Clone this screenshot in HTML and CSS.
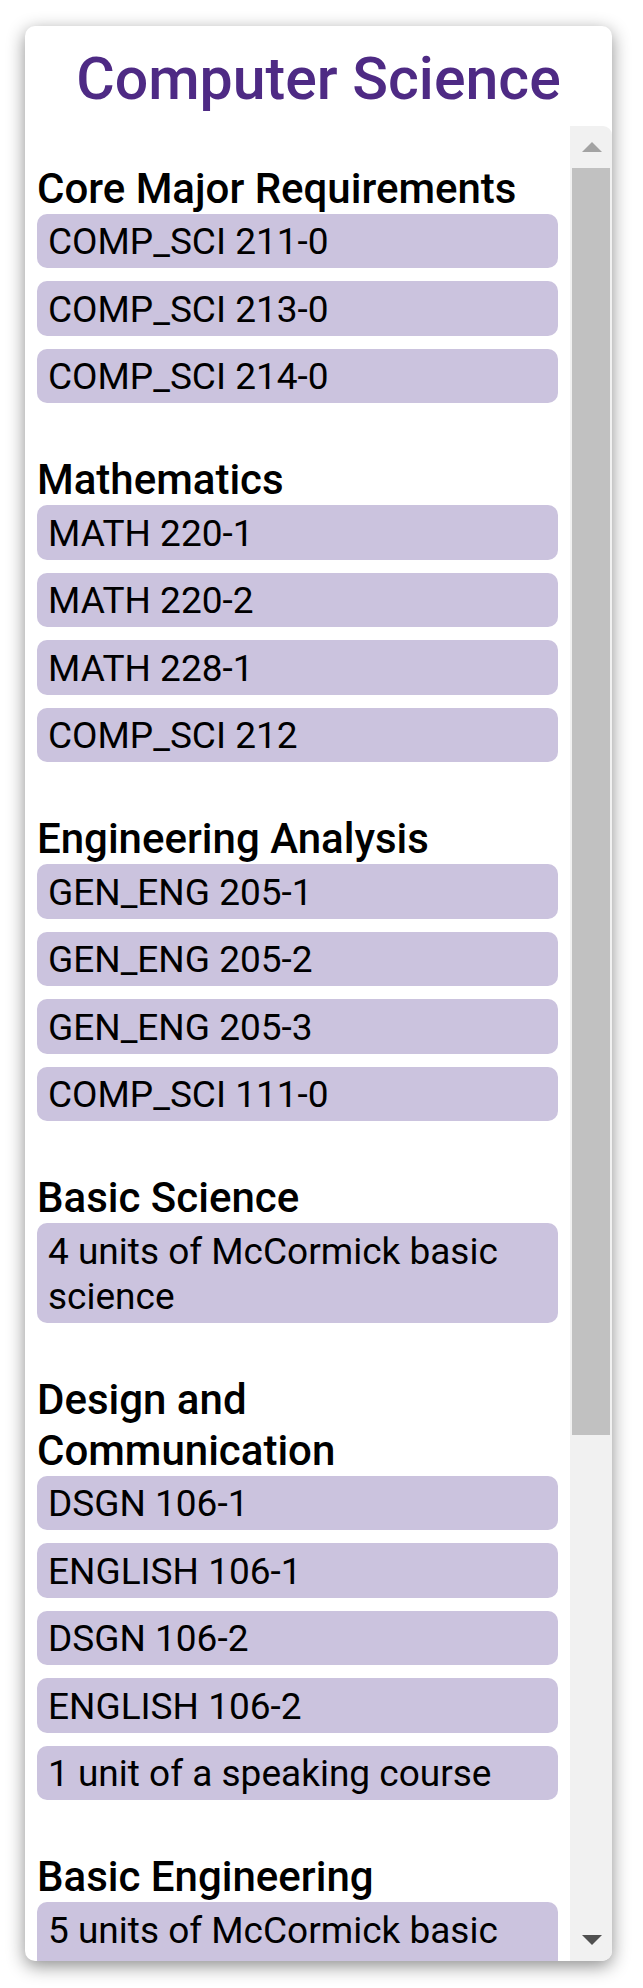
FILE: index.html
```html
<!DOCTYPE html>
<html lang="en">
<head>
<meta charset="utf-8">
<title>Computer Science</title>
<link rel="stylesheet" href="styles.css">
</head>
<body>
<div class="card">
  <h1 class="title">Computer Science</h1>
  <div class="scroller">
    <div class="content">
      <section class="group">
        <h3 class="group-title">Core Major Requirements</h3>
        <div class="course">COMP_SCI 211-0</div>
        <div class="course">COMP_SCI 213-0</div>
        <div class="course">COMP_SCI 214-0</div>
      </section>
      <section class="group">
        <h3 class="group-title">Mathematics</h3>
        <div class="course">MATH 220-1</div>
        <div class="course">MATH 220-2</div>
        <div class="course">MATH 228-1</div>
        <div class="course">COMP_SCI 212</div>
      </section>
      <section class="group">
        <h3 class="group-title">Engineering Analysis</h3>
        <div class="course">GEN_ENG 205-1</div>
        <div class="course">GEN_ENG 205-2</div>
        <div class="course">GEN_ENG 205-3</div>
        <div class="course">COMP_SCI 111-0</div>
      </section>
      <section class="group">
        <h3 class="group-title">Basic Science</h3>
        <div class="course">4 units of McCormick basic science</div>
      </section>
      <section class="group">
        <h3 class="group-title">Design and Communication</h3>
        <div class="course">DSGN 106-1</div>
        <div class="course">ENGLISH 106-1</div>
        <div class="course">DSGN 106-2</div>
        <div class="course">ENGLISH 106-2</div>
        <div class="course">1 unit of a speaking course</div>
      </section>
      <section class="group">
        <h3 class="group-title">Basic Engineering</h3>
        <div class="course">5 units of McCormick basic engineering</div>
      </section>
    </div>
    <div class="scrollbar">
      <div class="sb-btn">
        <svg class="sb-arrow" width="20" height="10" viewBox="0 0 20 10"><polygon points="10,0 20,10 0,10" fill="#a3a3a3"/></svg>
      </div>
      <div class="sb-track">
        <div class="sb-thumb"></div>
      </div>
      <div class="sb-btn">
        <svg class="sb-arrow" width="20" height="10" viewBox="0 0 20 10"><polygon points="0,0 20,0 10,10" fill="#505050"/></svg>
      </div>
    </div>
  </div>
</div>
</body>
</html>
```
FILE: styles.css
```css
html, body {
  margin: 0;
  padding: 0;
  background: #ffffff;
}

body {
  font-family: Roboto, "Liberation Sans", sans-serif;
  color: #000;
  padding: 26px 31px 0 25px;
  height: 1988px;
  box-sizing: border-box;
  overflow: hidden;
}

.card {
  width: 587px;
  height: 1935px;
  background: #fff;
  border-radius: 10px;
  box-shadow: 0 5px 18px rgba(0, 0, 0, 0.45);
  overflow: hidden;
  display: flex;
  flex-direction: column;
}

.title {
  margin: 0;
  height: 100px;
  box-sizing: border-box;
  padding-top: 18px;
  font-size: 59px;
  font-weight: 500;
  line-height: normal;
  text-align: center;
  color: #4e2a84;
}

.scroller {
  flex: 1;
  min-height: 0;
  display: flex;
  border-top-right-radius: 9px;
  overflow: hidden;
}

.content {
  flex: 1;
  min-width: 0;
  padding: 0 12px;
  overflow: hidden;
}

.group {
  padding-top: 37px;
}

.group + .group {
  padding-top: 38px;
}

.group-title {
  margin: 0;
  padding-right: 16px;
  font-size: 42px;
  font-weight: 500;
  line-height: 51px;
}

.course {
  background: #cbc3de;
  border-radius: 10px;
  padding: 5.3px 11px 4.1px;
  margin-bottom: 13.1px;
  font-size: 37px;
  line-height: 45px;
}

.scrollbar {
  width: 42px;
  flex: none;
  background: #f1f1f1;
  display: flex;
  flex-direction: column;
}

.sb-btn {
  height: 42px;
  flex: none;
  display: flex;
  justify-content: center;
  align-items: center;
  padding-left: 1px;
}

.sb-arrow {
  display: block;
}

.sb-track {
  flex: 1;
  padding: 0 2px;
}

.sb-thumb {
  height: 1267px;
  background: #c1c1c1;
}
```
